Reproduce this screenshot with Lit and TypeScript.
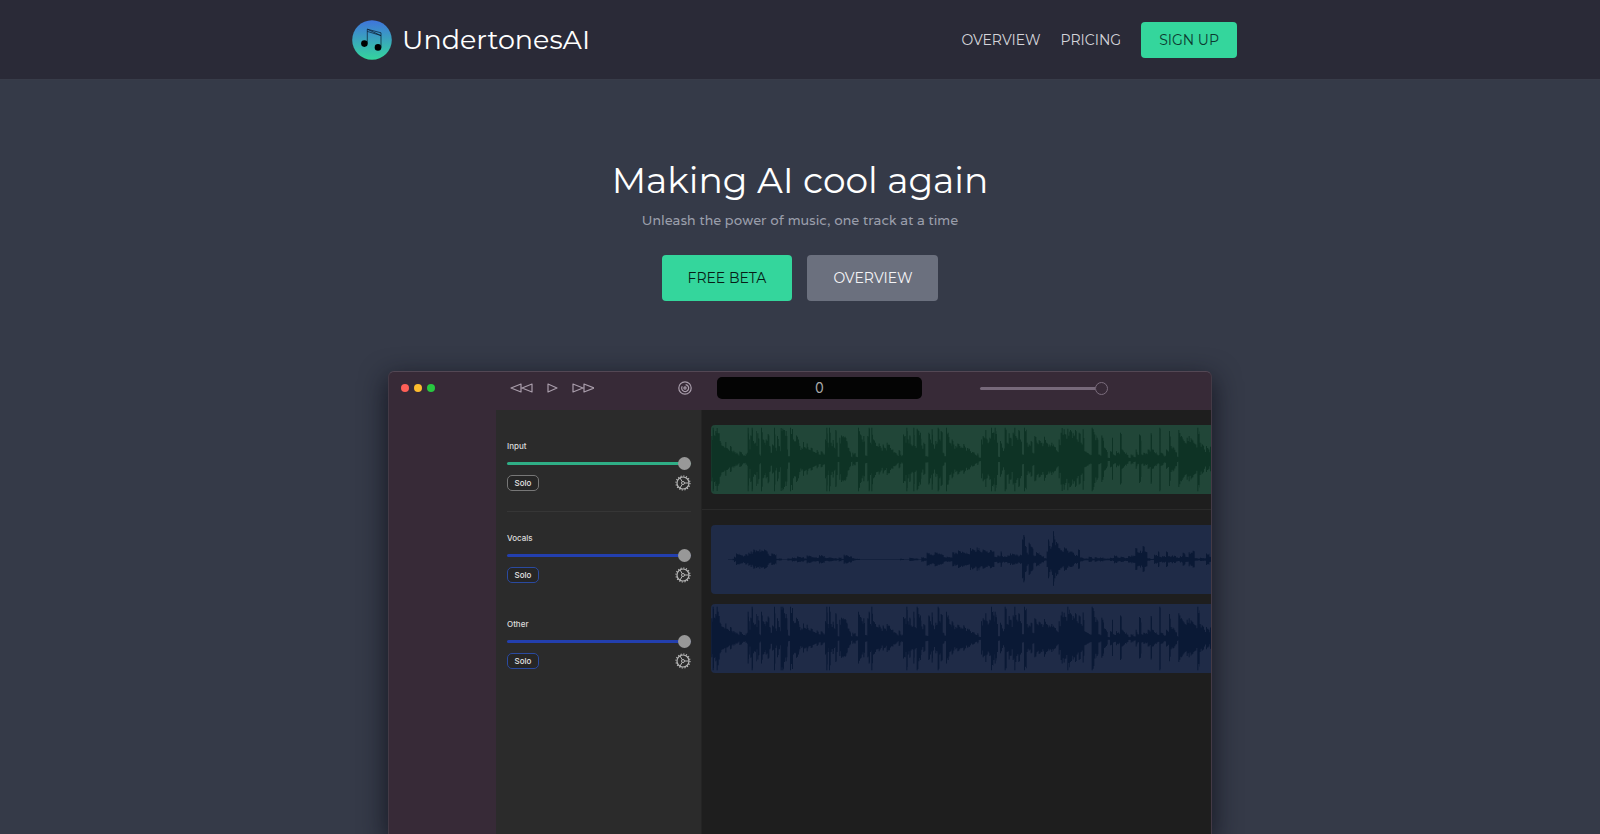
import { LitElement, html, svg, css } from "lit";
import { customElement, property } from "lit/decorators.js";
import { classMap } from "lit/directives/class-map.js";

/* Each envelope is a list of x:amplitude steps; a step lasts until the next one starts. */
const MIX =
  "1:70 5:95 9:72 13:85 17:94 23:78 26:55 31:42 35:40 40:35 43:52 46:34 51:30 57:40 62:25 67:26 71:22 76:20 80:15 85:24 93:16 99:12 104:17 108:20 110:95 114:60 116:30 118:72 122:95 126:55 131:50 135:85 137:40 139:78 143:62 145:15 150:95 155:60 160:50 164:60 170:76 175:40 179:20 183:45 189:95 193:35 198:70 203:40 207:25 209:94 214:92 219:88 224:85 229:30 231:10 237:95 246:60 251:55 255:72 261:60 265:40 271:35 276:52 281:36 287:48 292:30 299:35 305:24 312:20 317:28 323:15 329:25 335:18 342:60 346:95 350:50 354:95 359:50 365:58 369:35 373:88 377:50 380:8 385:65 390:72 395:70 401:68 406:55 410:35 415:25 420:8 424:20 434:8 441:95 447:75 452:60 457:70 462:12 469:70 473:95 477:50 481:95 486:60 492:50 497:40 503:48 509:35 515:45 519:35 527:50 532:45 537:34 544:30 550:22 557:14 563:28 568:14 576:75 581:70 586:95 590:60 595:72 599:45 607:95 611:40 617:92 622:85 627:80 631:42 637:50 643:10 652:80 657:60 662:90 666:45 673:55 680:95 685:60 689:85 695:20 700:10 705:95 710:80 715:50 722:60 727:45 733:40 739:48 745:40 752:35 757:46 762:36 769:34 777:25 785:22 792:14 799:18 803:6 810:60 815:70 823:88 827:60 835:65 840:95 847:80 851:95 858:50 861:8 867:55 873:35 881:95 887:50 893:78 898:65 902:40 905:80 910:95 916:65 922:88 927:60 933:15 939:95 947:50 953:45 959:55 964:20 970:70 977:50 983:58 991:50 999:68 1005:50 1013:45 1021:50 1029:38 1037:25 1043:60 1049:80 1052:94 1063:75 1069:92 1077:88 1085:78 1092:88 1097:60 1103:80 1109:50 1115:90 1120:25 1127:20 1135:15 1142:95 1150:75 1157:65 1162:15 1171:72 1179:35 1185:28 1190:5 1197:25 1203:65 1206:15 1215:25 1222:20 1227:80 1232:30 1239:22 1247:14 1252:6 1259:15 1267:8 1274:30 1279:15 1284:75 1291:15 1297:20 1305:18 1310:30 1319:78 1323:30 1329:22 1337:15 1345:95 1349:20 1357:12 1365:30 1374:85 1379:40 1387:35 1393:22 1398:8 1402:88 1410:70 1415:60 1421:50 1427:65 1433:70 1441:60 1447:50 1453:45 1459:95 1466:50 1473:45 1479:30 1485:40 1492:30 1497:38 1503:0";
const VOCALS =
  "51:1 65:2 69:8 75:18 85:14 93:12 103:16 112:20 119:24 127:30 135:27 145:30 153:26 159:30 167:24 173:12 181:18 189:16 196:2 203:3 213:1 229:3 243:6 251:4 258:9 267:7 279:3 287:12 301:7 312:6 324:13 333:11 341:5 353:6 365:4 377:2 383:6 391:2 398:14 411:10 423:4 431:2 447:1 567:2 579:1 595:5 607:3 622:1 631:7 639:4 647:20 659:15 671:22 683:18 693:14 698:7 707:8 717:6 724:22 733:20 741:27 747:24 757:22 767:18 777:34 787:28 797:36 805:26 815:30 827:24 837:28 847:24 850:8 859:12 869:24 873:10 883:8 889:12 897:18 907:16 919:12 927:14 933:60 937:73 942:40 947:20 953:50 959:38 967:12 975:22 985:14 991:10 999:4 1007:24 1011:60 1015:40 1023:50 1026:84 1030:60 1035:52 1042:34 1049:28 1059:36 1069:26 1079:24 1089:14 1101:30 1107:6 1117:3 1133:8 1143:3 1151:7 1159:4 1167:6 1177:3 1197:5 1209:12 1219:6 1229:8 1239:5 1251:10 1261:12 1273:34 1279:22 1287:26 1295:40 1301:24 1309:4 1317:2 1329:14 1341:24 1345:8 1353:10 1365:24 1371:10 1383:12 1395:6 1407:10 1415:20 1423:8 1433:22 1445:26 1451:4 1459:3 1467:5 1477:4 1485:18 1495:8 1503:0";

type Step = [number, number];
const parse = (text: string): Step[] => text.split(" ").map((p) => p.split(":").map(Number) as Step);

/* Subdivides the steps into thin columns with a little ripple. */
function outline(steps: Step[], mid: number): string {
  const top: string[] = [];
  const bottom: string[] = [];
  for (let i = 0; i < steps.length - 1; i++) {
    const [start, amp] = steps[i];
    const end = steps[i + 1][0];
    for (let x = start, k = 0; x < end; x += 3, k++) {
      const ripple = k === 0 ? 1 : 0.7 + 0.26 * Math.abs(Math.sin(x * 1.7));
      const a = Math.max(1, amp * ripple);
      const b = Math.max(1, a * (amp >= 90 ? 1 : 0.93));
      const to = Math.min(x + 3, end);
      top.push(`${x} ${(mid - a).toFixed(1)}L${to} ${(mid - a).toFixed(1)}`);
      bottom.push(`${to} ${(mid + b).toFixed(1)}L${x} ${(mid + b).toFixed(1)}`);
    }
  }
  return `M${top.join("L")}L${bottom.reverse().join("L")}Z`;
}

const mix = parse(MIX);
const WAVES: Record<string, string> = {
  input: outline(mix, 103),
  vocals: outline(parse(VOCALS), 103),
  other: outline(mix.map(([x, a], i): Step => [x, a > 90 ? (i % 3 ? 95 : 80) : a * 0.86]), 103),
};

@customElement("wave-clip")
class WaveClip extends LitElement {
  @property() kind = "input";
  static styles = css`
    :host { display: block; height: 69px; overflow: hidden; border-radius: 4px 0 0 4px; background: #1f2b47; }
    :host([kind="input"]) { background: #214638; }
    svg { display: block; height: 69px; width: 501px; fill: #0a1935; }
    :host([kind="input"]) svg { fill: #0e3325; }
  `;
  render() {
    return html`<svg viewBox="0 0 1503 206" preserveAspectRatio="none" aria-hidden="true"><path d=${WAVES[this.kind]}></path></svg>`;
  }
}

@customElement("track-strip")
class TrackStrip extends LitElement {
  @property() name = "";
  @property({ type: Boolean }) green = false;
  static styles = css`
    :host { display: block; font-family: Inter, "Liberation Sans", sans-serif; }
    label { display: block; font-size: 8px; line-height: 12px; font-weight: 500; color: #dcdcdc; }
    input { appearance: none; display: block; width: 100%; height: 13px; margin: 5px 0; background: none; --line: #233fae; }
    input.green { --line: #2fae86; }
    input::-webkit-slider-runnable-track { height: 3px; border-radius: 2px; background: var(--line); }
    input::-webkit-slider-thumb { appearance: none; width: 13px; height: 13px; margin-top: -5px; border-radius: 50%; background: #989898; }
    .row { display: flex; justify-content: space-between; align-items: center; height: 16px; }
    button { height: 16px; width: 32px; padding: 0; border: 1px solid #2a4aa0; border-radius: 5px; background: #262626; color: #e4e4e4; font: 500 8px/12px Inter, "Liberation Sans", sans-serif; }
    button.green { border-color: #777; }
    svg { display: block; width: 16px; height: 16px; }
  `;
  render() {
    const tone = classMap({ green: this.green });
    return html`
      <label for="level">${this.name}</label>
      <input id="level" class=${tone} type="range" min="0" max="100" value="100" />
      <div class="row">
        <button class=${tone}>Solo</button>
        <svg viewBox="0 0 16 16" fill="none" stroke="#b4b4b4" role="img" aria-label="Settings">
          <circle cx="8" cy="8" r="6" stroke-width="1.2"></circle>
          <circle cx="8" cy="8" r="7" stroke-width="1.2" stroke-dasharray="1.2 1.55"></circle>
          <circle cx="8" cy="8" r="1.5" stroke-width="1"></circle>
          <path d="M9.5 8H14M7.2 6.7 5 2.8M7.2 9.3 5 13.2" stroke-width="1"></path>
        </svg>
      </div>
    `;
  }
}

@customElement("app-root")
class AppRoot extends LitElement {
  static styles = css`
    * { box-sizing: border-box; }
    :host { display: flex; flex-direction: column; height: 100vh; overflow: hidden; background: #353a48; color: #fff; font-family: Montserrat, "Open Sans", sans-serif; }
    a { color: inherit; text-decoration: none; }
    header { background: #2a2a37; border-bottom: 1px solid #383c49; flex: none; }
    .bar { max-width: 896px; margin: 0 auto; padding: 1px 11px 0 0; height: 79px; display: flex; align-items: center; justify-content: space-between; }
    .brand { display: flex; align-items: center; gap: 10px; font-size: 27px; line-height: 40px; }
    .brand svg { width: 40px; height: 40px; }
    nav { display: flex; align-items: center; gap: 20px; font-size: 14px; line-height: 20px; color: #d4d4da; margin-bottom: 1px; }
    .signup { padding: 8px 18px; border-radius: 4px; background: #34d69c; color: #0c3a30; }
    main { flex: 1; display: flex; flex-direction: column; align-items: center; min-height: 0; padding-top: 78px; }
    h1 { margin: 0; font-size: 36px; line-height: 44px; font-weight: 400; }
    p { margin: 7px 0 0; font-family: Varela, "Noto Sans", sans-serif; font-size: 14px; line-height: 22px; color: #9a9eab; }
    .actions { display: flex; gap: 15px; margin: 24px 0 70px; }
    .actions a { padding: 13px 26px; border-radius: 4px; font-size: 14px; line-height: 20px; background: #6b707e; color: #f4f4f6; }
    .actions .main { background: #34d69c; color: #071d17; }
    .window { width: 100%; max-width: 824px; flex: 1; display: flex; flex-direction: column; overflow: hidden; background: #372a37; border: 1px solid #443a46; border-top-color: #534754; border-bottom: 0; border-radius: 6px 6px 0 0; box-shadow: 0 8px 26px 2px rgba(14, 15, 26, 0.75); }
    .tools, .body { display: grid; grid-template-columns: 107px 205px 1fr; }
    .tools { height: 38px; align-items: center; padding-bottom: 6px; }
    .body { flex: 1; }
    .lights { display: flex; gap: 5px; padding-left: 12px; }
    .lights i { width: 8px; height: 8px; border-radius: 50%; background: #ff5f57; }
    .lights i:nth-child(2) { background: #febc2e; }
    .lights i:nth-child(3) { background: #28c840; }
    .transport { display: flex; align-items: center; padding: 0 9px 0 14px; }
    .transport svg { display: block; height: 14px; fill: none; stroke: #a99dab; stroke-width: 1.2; }
    .transport .keys { width: 84px; }
    .transport .loop { width: 14px; margin-left: auto; }
    .readout { display: flex; align-items: center; padding-left: 16px; gap: 58px; }
    output { width: 205px; height: 22px; border-radius: 5px; background: #040404; color: #a8a8a8; text-align: center; font: 14px/22px Inter, sans-serif; }
    input { appearance: none; width: 128px; height: 14px; margin: 0; background: none; }
    input::-webkit-slider-runnable-track { height: 3px; border-radius: 2px; background: linear-gradient(90deg, #77697a calc(100% - 13px), transparent 0); }
    input::-webkit-slider-thumb { appearance: none; width: 13px; height: 13px; margin-top: -5px; border: 1px solid #7b6d7d; border-radius: 50%; background: #372a37; }
    .strips { background: #2b2b2b; padding: 30px 10px 0 11px; }
    .strips track-strip + track-strip { margin-top: 35px; }
    hr { height: 1px; margin: 20px 0; border: 0; background: #363636; }
    .clips { background: #1e1e1e; padding: 15px 0 0 9px; border-left: 1px solid #242424; min-width: 0; overflow: hidden; }
    .clips hr { margin: 15px 0 15px -9px; background: #2a2a2a; }
    .clips wave-clip + wave-clip { margin-top: 10px; }
  `;

  render() {
    return html`
      <header>
        <div class="bar">
          <a class="brand" href="#">
            <svg viewBox="0 0 40 40" aria-hidden="true">
              <defs><linearGradient id="g" x1="0" y1="0" x2="0" y2="1"><stop offset="0" stop-color="#3f74dc"></stop><stop offset="1" stop-color="#34d69c"></stop></linearGradient></defs>
              <circle cx="20" cy="20" r="19.8" fill="url(#g)"></circle>
              <g fill="#000"><circle cx="12.4" cy="23.6" r="3.3"></circle><circle cx="26" cy="27.4" r="3.3"></circle></g>
              <path d="M15.3 23.6V9.2L29 12.8V27.4M15.3 11.4 29 15.6M15.3 9.2 29 15.6" fill="none" stroke="#0a1a2a" stroke-width=".7"></path>
            </svg>
            UndertonesAI
          </a>
          <nav>
            <a href="#overview">OVERVIEW</a>
            <a href="#pricing">PRICING</a>
            <a class="signup" href="#signup">SIGN UP</a>
          </nav>
        </div>
      </header>
      <main>
        <h1>Making AI cool again</h1>
        <p>Unleash the power of music, one track at a time</p>
        <div class="actions">
          <a class="main" href="#beta">FREE BETA</a>
          <a href="#overview">OVERVIEW</a>
        </div>
        <section class="window" aria-label="Mixer">
          <div class="tools">
            <div class="lights"><i></i><i></i><i></i></div>
            <div class="transport">
              <svg class="keys" viewBox="0 0 84 14" aria-hidden="true">
                ${svg`<path d="M11 3V11L1 7ZM22 3V11L12 7ZM38 3V11L47 7ZM63 3V11L73 7ZM74 3V11L84 7Z" stroke-linejoin="round"></path>`}
              </svg>
              <svg class="loop" viewBox="0 0 14 14" aria-hidden="true">
                <circle cx="7" cy="7" r="6.2"></circle>
                <path d="M4.2 5.2A3.5 3.5 0 1 0 7.6 3.6"></path>
                <circle cx="7" cy="7" r="1.1"></circle>
              </svg>
            </div>
            <div class="readout">
              <output>0</output>
              <input type="range" aria-label="Volume" min="0" max="100" value="100" />
            </div>
          </div>
          <div class="body">
            <div></div>
            <div class="strips">
              <track-strip name="Input" green></track-strip>
              <hr />
              <track-strip name="Vocals"></track-strip>
              <track-strip name="Other"></track-strip>
            </div>
            <div class="clips">
              <wave-clip kind="input"></wave-clip>
              <hr />
              <wave-clip kind="vocals"></wave-clip>
              <wave-clip kind="other"></wave-clip>
            </div>
          </div>
        </section>
      </main>
    `;
  }
}
